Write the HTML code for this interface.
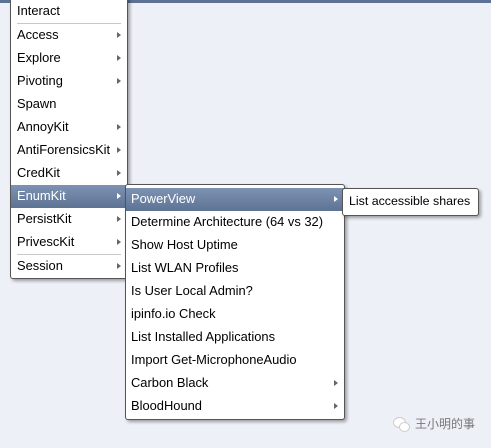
<!DOCTYPE html><html><head><style>
body{margin:0;width:491px;height:448px;background:#eef0f8;position:relative;overflow:hidden;font-family:"Liberation Sans",Tahoma,sans-serif;font-size:12.9px;color:#000}
.top{position:absolute;left:0;top:0;width:491px;height:3px;background:#5b7294}
.m{position:absolute;background:#fff;border:1px solid #555;border-radius:3px;box-shadow:2px 2px 3px rgba(0,0,0,.35)}
.i{position:absolute;left:0;right:0;height:23px;line-height:21px;padding-left:6px;white-space:nowrap}
.i.h{background:linear-gradient(#7e93b3,#5d7394);color:#fff}
.a{position:absolute;right:6px;top:8px;width:0;height:0;border-left:4px solid #666;border-top:3.5px solid transparent;border-bottom:3.5px solid transparent}
.h .a{border-left-color:#fff}
.s{position:absolute;left:6px;right:6px;height:1px;background:#c8c8c8}
</style></head><body>
<div class="top"></div>
<div class="m" style="left:10px;top:-4px;width:116px;height:281px">
<div class="i" style="top:3px">Interact</div>
<div class="s" style="top:26px"></div>
<div class="i" style="top:27px">Access<span class="a"></span></div>
<div class="i" style="top:50px">Explore<span class="a"></span></div>
<div class="i" style="top:73px">Pivoting<span class="a"></span></div>
<div class="i" style="top:96px">Spawn</div>
<div class="i" style="top:119px">AnnoyKit<span class="a"></span></div>
<div class="i" style="top:142px">AntiForensicsKit<span class="a"></span></div>
<div class="i" style="top:165px">CredKit<span class="a"></span></div>
<div class="i h" style="top:188px">EnumKit<span class="a"></span></div>
<div class="i" style="top:211px">PersistKit<span class="a"></span></div>
<div class="i" style="top:234px">PrivescKit<span class="a"></span></div>
<div class="s" style="top:257px"></div>
<div class="i" style="top:258px">Session<span class="a"></span></div>
</div>
<div class="m" style="left:125px;top:184px;width:218px;height:234px">
<div class="i h" style="top:3px;padding-left:5px">PowerView<span class="a"></span></div>
<div class="i" style="top:26px;padding-left:5px">Determine Architecture (64 vs 32)</div>
<div class="i" style="top:49px;padding-left:5px">Show Host Uptime</div>
<div class="i" style="top:72px;padding-left:5px">List WLAN Profiles</div>
<div class="i" style="top:95px;padding-left:5px">Is User Local Admin?</div>
<div class="i" style="top:118px;padding-left:5px">ipinfo.io Check</div>
<div class="i" style="top:141px;padding-left:5px">List Installed Applications</div>
<div class="i" style="top:164px;padding-left:5px">Import Get-MicrophoneAudio</div>
<div class="i" style="top:187px;padding-left:5px">Carbon Black<span class="a"></span></div>
<div class="i" style="top:210px;padding-left:5px">BloodHound<span class="a"></span></div>
</div>
<div class="m" style="left:342px;top:188px;width:135px;height:26px">
<div class="i" style="top:2px;padding-left:6px;font-size:12.4px">List accessible shares</div>
</div>
<div style="position:absolute;left:393px;top:417px;width:16px;height:14px">
<div style="position:absolute;left:0;top:0;width:11px;height:9px;border-radius:50%;background:#fff;border:1px solid #ccc"></div>
<div style="position:absolute;left:6px;top:5px;width:9px;height:8px;border-radius:50%;background:#fff;border:1px solid #ccc"></div>
</div>
<div style="position:absolute;left:415px;top:417px;font-family:'Noto Sans CJK SC',sans-serif;font-size:12px;color:#777;line-height:14px">王小明的事</div>
</body></html>
